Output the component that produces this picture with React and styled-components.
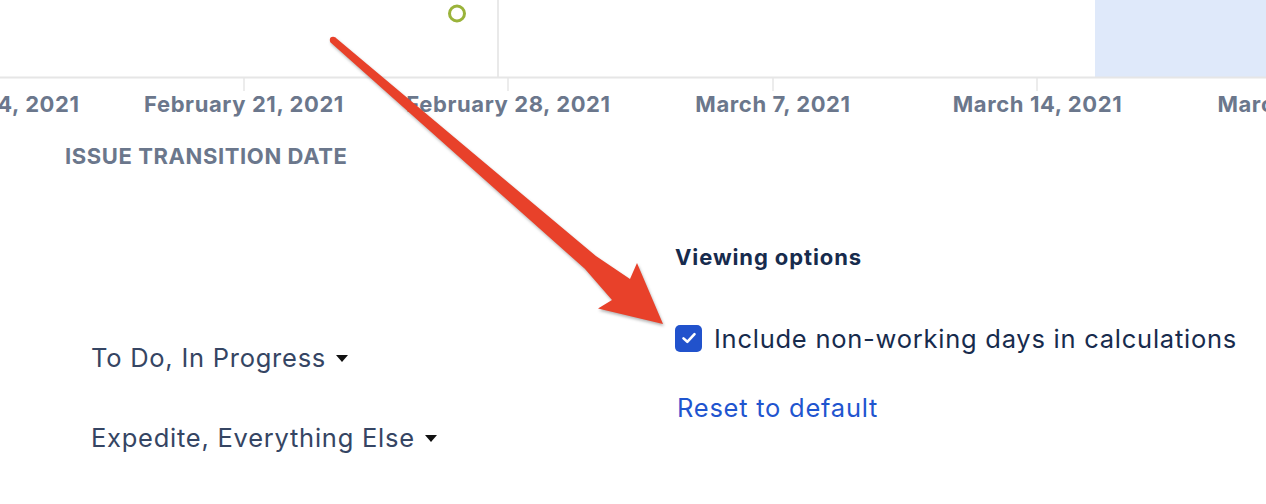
import React from 'react'
import styled, { createGlobalStyle } from 'styled-components'

const GlobalStyle = createGlobalStyle`
  html, body {
    margin: 0;
    padding: 0;
    background: #fff;
  }
  body {
    font-family: Inter, "Noto Sans", "Liberation Sans", sans-serif;
    -webkit-font-smoothing: antialiased;
  }
`

const TICKS = [244, 508, 773, 1037]
const DATES = ['February 14, 2021', 'February 21, 2021', 'February 28, 2021', 'March 7, 2021', 'March 14, 2021', 'March 21, 2021']

export default function App() {
  return (
    <Page>
      <GlobalStyle />
      <Chart>
        <Plot width="1266" height="92" viewBox="0 0 1266 92">
          <rect x="1095" y="0" width="171" height="77" fill="#dfe9fa" />
          <line x1="498" y1="0" x2="498" y2="77" stroke="#e2e2e2" strokeWidth="1.5" />
          <line x1="0" y1="77.5" x2="1266" y2="77.5" stroke="#e6e6e6" strokeWidth="1.8" />
          {TICKS.map(x => (
            <line key={x} x1={x} y1="78" x2={x} y2="91" stroke="#e6e6e6" strokeWidth="1.5" />
          ))}
          <circle cx="457" cy="13.5" r="7.5" fill="none" stroke="#9ab33a" strokeWidth="3" />
        </Plot>
        <DateRow>
          {DATES.map(d => (
            <DateLabel key={d}>{d}</DateLabel>
          ))}
        </DateRow>
        <AxisTitle>ISSUE TRANSITION DATE</AxisTitle>
      </Chart>

      <Controls>
        <Filters>
          <Dropdown>
            To Do, In Progress <Caret />
          </Dropdown>
          <Dropdown>
            Expedite, Everything Else <Caret />
          </Dropdown>
        </Filters>
        <Options>
          <OptionsTitle>Viewing options</OptionsTitle>
          <CheckRow>
            <Box>
              <svg width="16" height="14" viewBox="0 0 16 14">
                <path d="M2.5 7.4 L6.3 10.8 L13.5 3.2" fill="none" stroke="#fff" strokeWidth="2.6" strokeLinecap="round" strokeLinejoin="round" />
              </svg>
            </Box>
            Include non-working days in calculations
          </CheckRow>
          <ResetLink>Reset to default</ResetLink>
        </Options>
      </Controls>

      <Arrow width="1266" height="504" viewBox="0 0 1266 504">
        <circle cx="333" cy="40" r="3.2" fill="#e8412a" />
        <polygon
          fill="#e8412a"
          points="335.4,37.6 595.9,256 630,279 637,263 663,324 598,308.5 612,300 584.8,268.8 330.6,42.4"
        />
      </Arrow>
    </Page>
  )
}

const Page = styled.div`
  position: relative;
  width: 1266px;
  height: 504px;
  overflow: hidden;
  background: #fff;
`

const Chart = styled.div`
  display: flex;
  flex-direction: column;
`

const Plot = styled.svg`
  display: block;
`

const DateRow = styled.div`
  display: flex;
  margin-left: -152.75px;
  height: 24px;
`

const DateLabel = styled.div`
  flex: 0 0 264.5px;
  text-align: center;
  white-space: nowrap;
  font-size: 22px;
  line-height: 24px;
  font-weight: 700;
  color: #6b778c;
  letter-spacing: 0.6px;
`

const AxisTitle = styled.div`
  margin-top: 27px;
  padding-left: 65px;
  font-size: 22px;
  line-height: 26px;
  font-weight: 700;
  color: #6b778c;
  letter-spacing: 0.6px;
`

const Controls = styled.div`
  display: grid;
  grid-template-columns: 675px 1fr;
`

const Filters = styled.div`
  display: flex;
  flex-direction: column;
  gap: 52px;
  padding: 174px 0 0 91px;
`

const Dropdown = styled.div`
  display: flex;
  align-items: center;
  gap: 10px;
  height: 28px;
  font-size: 25.5px;
  letter-spacing: 0.75px;
  color: #354563;
`

const Caret = styled.span`
  width: 0;
  height: 0;
  border-left: 6.5px solid transparent;
  border-right: 6.5px solid transparent;
  border-top: 7px solid #111;
  margin-top: 3px;
`

const Options = styled.div`
  display: flex;
  flex-direction: column;
  padding-top: 75px;
`

const OptionsTitle = styled.div`
  font-size: 22px;
  line-height: 26px;
  font-weight: 700;
  letter-spacing: 0.9px;
  color: #172b4d;
`

const CheckRow = styled.label`
  display: flex;
  align-items: center;
  gap: 12px;
  margin-top: 53px;
  height: 30px;
  font-size: 25.5px;
  letter-spacing: 0.75px;
  color: #172b4d;
`

const Box = styled.span`
  display: flex;
  align-items: center;
  justify-content: center;
  width: 27px;
  height: 27px;
  border-radius: 5px;
  background: #2152cc;
`

const ResetLink = styled.a`
  margin-top: 40px;
  padding-left: 2px;
  font-size: 25.5px;
  letter-spacing: 0.75px;
  line-height: 30px;
  color: #1f55cf;
  cursor: pointer;
`

const Arrow = styled.svg`
  position: absolute;
  top: 0;
  left: 0;
  pointer-events: none;
  filter: drop-shadow(1px 2px 1.5px rgba(0, 0, 0, 0.3));
`
